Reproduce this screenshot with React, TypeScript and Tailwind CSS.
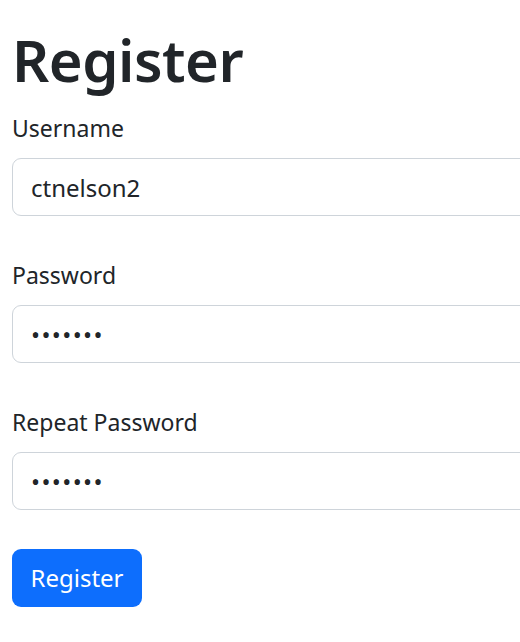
import React from 'react';

const fieldCls =
  'block w-[600px] h-[58px] px-[18px] text-[24px] text-[#212529] bg-white border border-[#ced4da] rounded-[9px] outline-none';

export default function App() {
  return (
    <div
      className="w-full min-h-screen overflow-hidden bg-white text-[#212529] px-3 pt-6"
      style={{ fontFamily: '"Noto Sans", "Open Sans", sans-serif' }}
    >
      <h1 className="text-[58px] leading-[72px] font-semibold tracking-[-0.5px] mb-[14px]">Register</h1>
      <form onSubmit={(e) => e.preventDefault()}>
        <div className="mb-[41px]">
          <label className="block text-[23px] leading-[36px] mb-3">Username</label>
          <input className={fieldCls} type="text" defaultValue="ctnelson2" readOnly />
        </div>
        <div className="mb-[41px]">
          <label className="block text-[23px] leading-[36px] mb-3">Password</label>
          <input className={fieldCls + ' tracking-[1.4px]'} type="password" defaultValue="1234567" readOnly />
        </div>
        <div className="mb-[39px]">
          <label className="block text-[23px] leading-[36px] mb-3">Repeat Password</label>
          <input className={fieldCls + ' tracking-[1.4px]'} type="password" defaultValue="1234567" readOnly />
        </div>
        <button
          type="submit"
          className="h-[58px] w-[130px] rounded-[9px] bg-[#0d6efd] text-white text-[24px] leading-[36px]"
        >
          Register
        </button>
      </form>
    </div>
  );
}
